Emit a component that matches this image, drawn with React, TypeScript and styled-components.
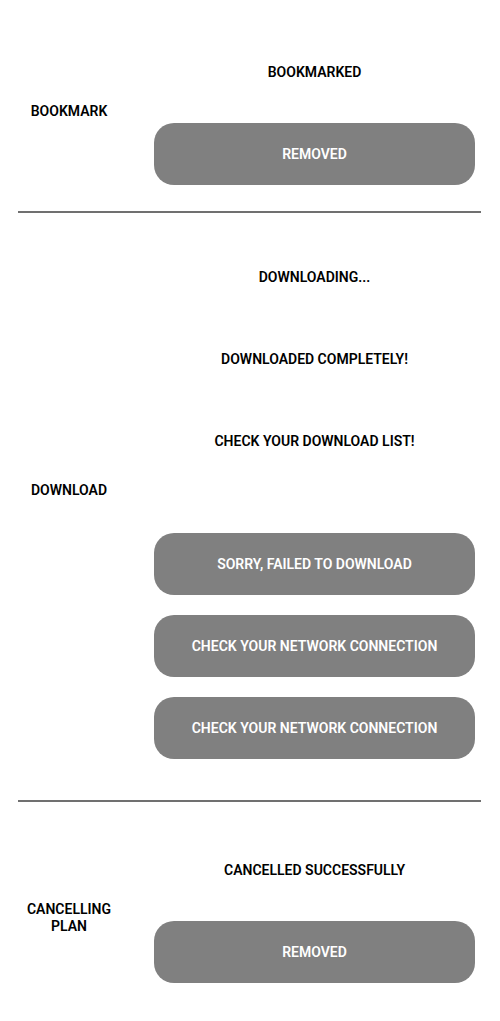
import React from "react";
import styled, { createGlobalStyle } from "styled-components";

const Global = createGlobalStyle`
  html, body { margin: 0; padding: 0; background: #ffffff; }
  body { font-family: Roboto, "Liberation Sans", Arial, sans-serif; }
  * { box-sizing: border-box; }
`;

const Page = styled.div`
  width: 500px;
  display: flex;
  flex-direction: column;
`;

const Section = styled.section<{ $top: number; $bottom: number }>`
  display: flex;
  flex-direction: row;
  align-items: center;
  gap: 34px;
  padding: ${(p) => p.$top}px 0 ${(p) => p.$bottom}px 18px;
`;

const Label = styled.div<{ $shift: number }>`
  width: 102px;
  flex: none;
  text-align: center;
  font-size: 14px;
  line-height: 17px;
  font-weight: 600;
  color: #000;
  text-transform: uppercase;
  margin-top: ${(p) => (p.$shift > 0 ? p.$shift * 2 : 0)}px;
  margin-bottom: ${(p) => (p.$shift < 0 ? -p.$shift * 2 : 0)}px;
`;

const List = styled.div`
  width: 321px;
  display: flex;
  flex-direction: column;
  gap: 20px;
`;

const Message = styled.div`
  height: 62px;
  display: flex;
  align-items: center;
  justify-content: center;
  font-size: 14px;
  font-weight: 600;
  color: #000;
  text-transform: uppercase;
`;

const Pill = styled.div`
  height: 62px;
  border-radius: 20px;
  background: #808080;
  display: flex;
  align-items: center;
  justify-content: center;
  font-size: 14px;
  font-weight: 600;
  color: #ffffff;
  text-transform: uppercase;
`;

const Spacer = styled.div<{ $h: number }>`
  height: ${(p) => p.$h}px;
`;

const Divider = styled.hr`
  margin: 0 19px 0 18px;
  border: none;
  height: 2px;
  background: #707070;
`;

export default function App() {
  return (
    <>
      <Global />
      <Page>
        <Section $top={41} $bottom={26}>
          <Label $shift={-2}>Bookmark</Label>
          <List>
            <Message>Bookmarked</Message>
            <Pill>Removed</Pill>
          </List>
        </Section>
        <Divider />
        <Section $top={33} $bottom={41}>
          <Label $shift={-12.5}>Download</Label>
          <List>
            <Message>Downloading...</Message>
            <Message>Downloaded completely!</Message>
            <Message>Check your download list!</Message>
            <Spacer $h={21} />
            <Pill>Sorry, failed to download</Pill>
            <Pill>Check your network connection</Pill>
            <Pill>Check your network connection</Pill>
          </List>
        </Section>
        <Divider />
        <Section $top={37} $bottom={38}>
          <Label $shift={6.5}>Cancelling plan</Label>
          <List>
            <Message>Cancelled successfully</Message>
            <Pill>Removed</Pill>
          </List>
        </Section>
      </Page>
    </>
  );
}
